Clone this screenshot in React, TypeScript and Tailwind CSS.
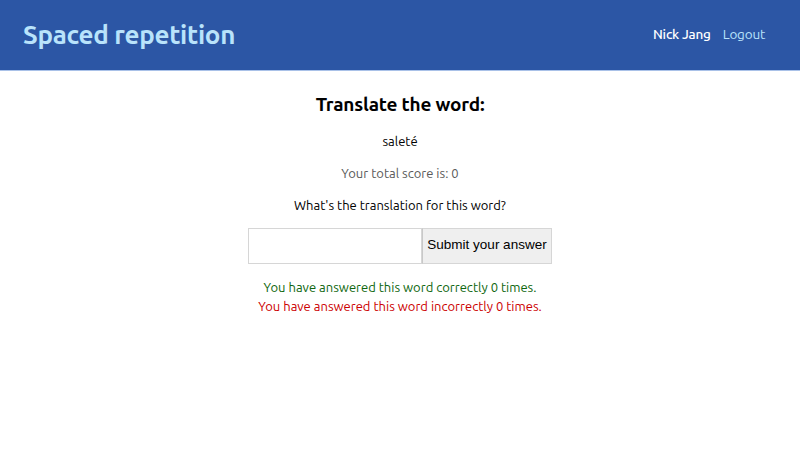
export default function App() {
  return (
    <div className="min-h-[453px] bg-white" style={{ fontFamily: "Ubuntu, 'Noto Sans', sans-serif" }}>
      <header className="h-[71px] bg-[#2c56a5] border-b border-[#a9c1e8] flex items-center justify-between px-[23px]">
        <h1 className="text-[26px] font-semibold text-[#b9e3fb] tracking-[-0.3px] -mt-[2px]">Spaced repetition</h1>
        <nav className="flex items-center gap-[12px] text-[13.5px] pr-[12px] tracking-[-0.2px] -mt-[2px]">
          <span className="text-white font-medium">Nick Jang</span>
          <a className="text-[#b9e3fb]">Logout</a>
        </nav>
      </header>
      <main className="flex flex-col items-center pt-[19px]">
        <h2 className="text-[19px] font-semibold text-black leading-[28px] tracking-[-0.2px]">Translate the word:</h2>
        <p className="mt-[14px] text-[13px] text-black">saleté</p>
        <p className="mt-[12px] text-[13px] text-[#5a5a5a]">Your total score is: 0</p>
        <p className="mt-[13px] text-[13px] text-black">What's the translation for this word?</p>
        <form className="mt-[12px] flex" onSubmit={(e) => e.preventDefault()}>
          <input className="w-[174px] h-[36px] border border-[#d6d6d6] bg-white outline-none px-2" />
          <button
            type="button"
            className="h-[36px] w-[130px] border border-[#d6d6d6] border-l-[#c8c8c8] bg-[#efefef] text-[13.5px] text-black"
            style={{ fontFamily: "'Liberation Sans', Arial, sans-serif" }}
          >
            Submit your answer
          </button>
        </form>
        <p className="mt-[14px] text-[13px] text-[#0d660d] leading-[19px]">You have answered this word correctly 0 times.</p>
        <p className="text-[13px] text-[#cc0000] leading-[19px]">You have answered this word incorrectly 0 times.</p>
      </main>
    </div>
  );
}
